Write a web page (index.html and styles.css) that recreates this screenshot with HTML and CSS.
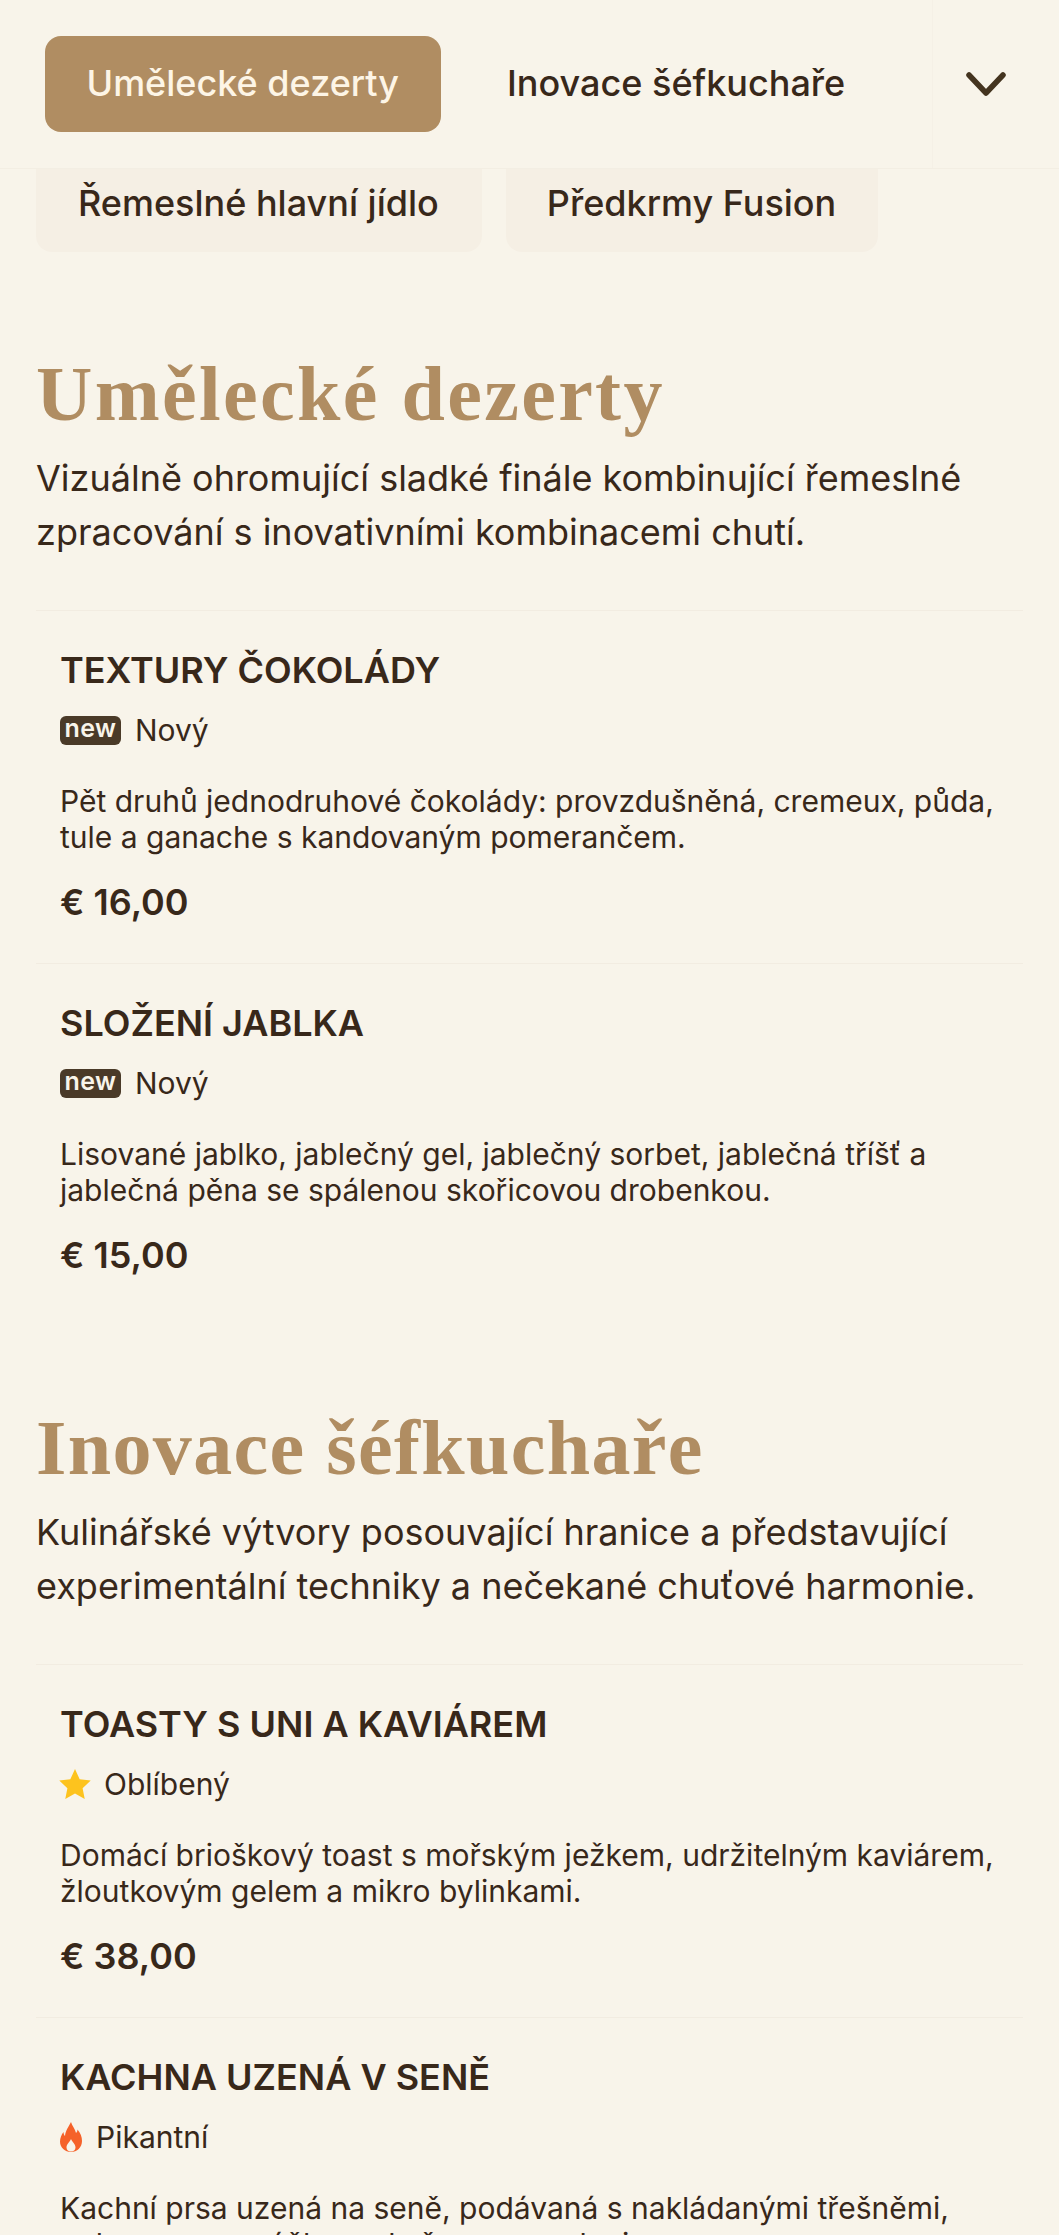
FILE: index.html
```html
<!DOCTYPE html>
<html lang="cs">
<head>
<meta charset="utf-8">
<title>Menu</title>
<link rel="stylesheet" href="styles.css">
</head>
<body>
<header class="topbar">
  <div class="tabs">
    <a class="tab tab-active">Umělecké dezerty</a>
    <a class="tab">Inovace šéfkuchaře</a>
  </div>
  <button class="more" aria-label="Více">
    <svg class="chevron" viewBox="0 0 40 24"><path d="M3 3 L20 21 L37 3"/></svg>
  </button>
</header>
<nav class="subtabs">
  <a class="subtab">Řemeslné hlavní jídlo</a>
  <a class="subtab">Předkrmy Fusion</a>
</nav>
<main>
  <section class="section">
    <h2 class="section-title title-wide">Umělecké dezerty</h2>
    <p class="section-desc">Vizuálně ohromující sladké finále kombinující řemeslné zpracování s inovativními kombinacemi chutí.</p>
    <div class="items">
      <article class="item">
        <h3 class="item-name">Textury čokolády</h3>
        <div class="tag"><span class="badge-new">new</span><span>Nový</span></div>
        <p class="item-desc">Pět druhů jednodruhové čokolády: provzdušněná, cremeux, půda, tule a ganache s kandovaným pomerančem.</p>
        <div class="price">€ 16,00</div>
      </article>
      <article class="item">
        <h3 class="item-name">Složení jablka</h3>
        <div class="tag"><span class="badge-new">new</span><span>Nový</span></div>
        <p class="item-desc">Lisované jablko, jablečný gel, jablečný sorbet, jablečná tříšť a jablečná pěna se spálenou skořicovou drobenkou.</p>
        <div class="price">€ 15,00</div>
      </article>
    </div>
  </section>
  <section class="section">
    <h2 class="section-title title-narrow">Inovace šéfkuchaře</h2>
    <p class="section-desc">Kulinářské výtvory posouvající hranice a představující experimentální techniky a nečekané chuťové harmonie.</p>
    <div class="items">
      <article class="item">
        <h3 class="item-name">Toasty s uni a kaviárem</h3>
        <div class="tag"><svg class="star" viewBox="0 0 24 24"><path d="M12 .8l3.500 7.600 8.300 1-6.100 5.700 1.600 8.200L12 19.200l-7.300 4.100 1.600-8.200L.2 9.400l8.300-1z"/></svg><span>Oblíbený</span></div>
        <p class="item-desc">Domácí brioškový toast s mořským ježkem, udržitelným kaviárem, žloutkovým gelem a mikro bylinkami.</p>
        <div class="price">€ 38,00</div>
      </article>
      <article class="item">
        <h3 class="item-name">Kachna uzená v seně</h3>
        <div class="tag"><svg class="flame" viewBox="0 0 22 30"><path fill-rule="evenodd" d="M11 0C12 4 15 6.500 16 11C17 10 17.500 9 17.500 7.500C20.500 11 22 15 22 19C22 25.500 17 30 11 30C5 30 0 25.500 0 19.500C0 16 1.500 12.500 3.500 10C3.500 11.500 4 13 5 14C5.500 8.500 8.500 5 11 0ZM11 17C10 20 6.500 22 6.500 25.500C6.500 28 8.500 29.500 11 29.500C13.500 29.500 15.500 28 15.500 25.500C15.500 22 12 20 11 17Z"/></svg><span>Pikantní</span></div>
        <p class="item-desc">Kachní prsa uzená na seně, podávaná s nakládanými třešněmi, pekanovou omáčkou a kořenovou zeleninou.</p>
        <div class="price">€ 34,00</div>
      </article>
    </div>
  </section>
</main>
</body>
</html>
```
FILE: styles.css
```css
html, body {
  margin: 0;
  height: 2235px;
  overflow: hidden;
  background: #f8f4ea;
}
body {
  font-family: Inter, "Noto Sans", sans-serif;
  color: #38281a;
}
.topbar {
  position: relative;
  z-index: 2;
  display: flex;
  height: 168px;
  background: #f8f4ea;
  border-bottom: 1px solid #f3eee3;
}
.tabs {
  flex: 1;
  display: flex;
  align-items: center;
  gap: 25px;
  padding-left: 45px;
  border-right: 1px solid #f5f0e6;
}
.tab {
  display: flex;
  align-items: center;
  height: 96px;
  padding: 0 41.500px 2px;
  box-sizing: border-box;
  font-size: 36px;
  font-weight: 500;
  border-radius: 16px;
  white-space: nowrap;
}
.tab-active {
  background: #b08d62;
  color: #fdf5e6;
}
.more {
  flex: none;
  width: 126px;
  padding: 0 21px 0 0;
  border: 0;
  background: none;
  display: flex;
  align-items: center;
  justify-content: center;
}
.chevron {
  width: 40px;
  height: 24px;
  fill: none;
  stroke: #44341f;
  stroke-width: 5.500;
  stroke-linecap: round;
  stroke-linejoin: round;
}
.subtabs {
  display: flex;
  gap: 24px;
  margin-top: -15px;
  padding: 0 36px;
}
.subtab {
  display: flex;
  align-items: center;
  height: 98px;
  padding: 0 43px 1px 42px;
  box-sizing: border-box;
  font-size: 36px;
  font-weight: 500;
  background: #f5efe4;
  border-radius: 16px;
}
.subtab + .subtab {
  padding: 0 42px 1px 41px;
}
.section {
  padding: 0 36px;
}
.section:first-child {
  margin-top: 99px;
}
.section + .section {
  margin-top: 89px;
}
.section-title {
  margin: 0;
  font-family: "Liberation Serif", serif;
  font-weight: 700;
  font-size: 78px;
  line-height: 86px;
  color: #b08d62;
}
.title-wide {
  letter-spacing: 2.350px;
}
.title-narrow {
  letter-spacing: 1.350px;
}
.section-desc {
  margin: 14px 0 0;
  font-size: 36px;
  line-height: 54px;
}
.items {
  margin-top: 51px;
}
.item {
  border-top: 1px solid #f2ece1;
  padding: 37px 24px 39px;
}
.item-name {
  margin: 0;
  font-size: 36px;
  line-height: 44px;
  font-weight: 600;
  text-transform: uppercase;
}
.tag {
  display: flex;
  align-items: center;
  gap: 14px;
  margin-top: 18px;
  height: 40px;
  font-size: 30px;
}
.badge-new {
  display: flex;
  align-items: center;
  justify-content: center;
  width: 61px;
  height: 29px;
  border-radius: 6px;
  background: #4a3a28;
  color: #f8f4ea;
  font-size: 25px;
  font-weight: 600;
  letter-spacing: .4px;
  line-height: 1;
  padding-bottom: 3px;
  box-sizing: border-box;
}
.star {
  width: 32px;
  height: 32px;
  margin: 0 -1px;
  fill: #fdc31e;
}
.flame {
  width: 22px;
  height: 30px;
  fill: #f5622a;
}
.item-desc {
  margin: 33px 0 0;
  font-size: 30px;
  line-height: 36px;
}
.price {
  margin-top: 25px;
  font-size: 36px;
  line-height: 44px;
  font-weight: 600;
}
```
